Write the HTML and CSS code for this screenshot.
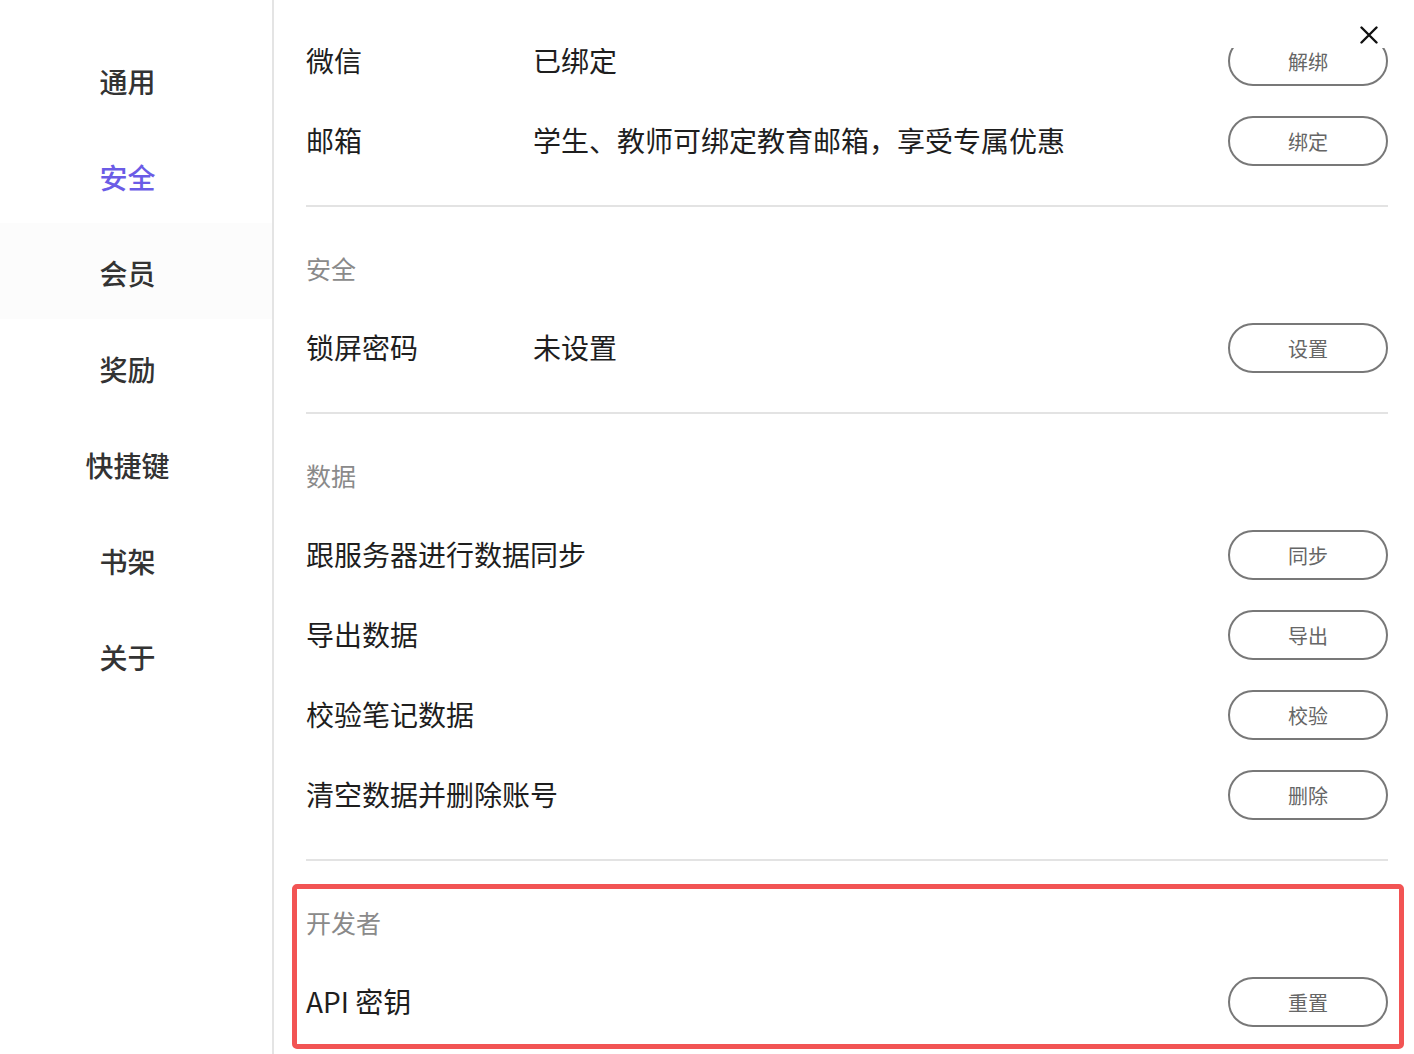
FILE: index.html
```html
<!DOCTYPE html>
<html lang="zh-CN">
<head>
<meta charset="utf-8">
<title>设置</title>
<link rel="stylesheet" href="styles.css">
</head>
<body>
<div class="app">
  <nav class="sidebar">
    <div class="nav-item">通用</div>
    <div class="nav-item active">安全</div>
    <div class="nav-item hover">会员</div>
    <div class="nav-item">奖励</div>
    <div class="nav-item">快捷键</div>
    <div class="nav-item">书架</div>
    <div class="nav-item">关于</div>
  </nav>
  <main class="pane">
    <header class="pane-head">
      <button class="close" aria-label="关闭">
        <svg width="18" height="18" viewBox="0 0 18 18"><path d="M1.5 1.5 L16.5 16.5 M16.5 1.5 L1.5 16.5" stroke="#111" stroke-width="2.4" stroke-linecap="round" fill="none"/></svg>
      </button>
    </header>
    <div class="scroll">
      <div class="content">
        <section class="section">
          <div class="row">
            <span class="label">微信</span>
            <span class="value">已绑定</span>
            <button class="btn">解绑</button>
          </div>
          <div class="row">
            <span class="label">邮箱</span>
            <span class="value">学生、教师可绑定教育邮箱，享受专属优惠</span>
            <button class="btn">绑定</button>
          </div>
        </section>
        <section class="section">
          <div class="sec-title">安全</div>
          <div class="row">
            <span class="label">锁屏密码</span>
            <span class="value">未设置</span>
            <button class="btn">设置</button>
          </div>
        </section>
        <section class="section">
          <div class="sec-title">数据</div>
          <div class="row">
            <span class="label wide">跟服务器进行数据同步</span>
            <button class="btn">同步</button>
          </div>
          <div class="row">
            <span class="label wide">导出数据</span>
            <button class="btn">导出</button>
          </div>
          <div class="row">
            <span class="label wide">校验笔记数据</span>
            <button class="btn">校验</button>
          </div>
          <div class="row">
            <span class="label wide">清空数据并删除账号</span>
            <button class="btn">删除</button>
          </div>
        </section>
        <section class="section last">
          <div class="sec-title">开发者</div>
          <div class="row">
            <span class="label wide">API 密钥</span>
            <button class="btn">重置</button>
          </div>
        </section>
      </div>
    </div>
  </main>
  <div class="highlight"></div>
</div>
</body>
</html>
```

FILE: styles.css
```css
* { box-sizing: border-box; }
html, body {
  margin: 0;
  padding: 0;
  background: #fff;
  height: 100%;
  overflow: hidden;
}
body {
  font-family: "Noto Sans CJK SC", "Noto Sans", "Liberation Sans", sans-serif;
  color: #222;
}
.app {
  position: relative;
  display: flex;
  width: 1414px;
  height: 1054px;
}
.sidebar {
  width: 274px;
  flex: none;
  border-right: 2px solid #e4e4e4;
  padding-top: 31px;
  display: flex;
  flex-direction: column;
}
.nav-item {
  height: 96px;
  display: flex;
  align-items: center;
  justify-content: center;
  padding-top: 4px;
  font-size: 28px;
  font-weight: 500;
  color: #333;
  margin-right: 17px;
}
.nav-item.active { color: #6b5ce6; }
.nav-item.hover { background: #fcfcfc; margin-right: 0; padding-right: 17px; }
.pane {
  flex: 1;
  display: flex;
  flex-direction: column;
  min-width: 0;
}
.pane-head {
  height: 48px;
  flex: none;
  display: flex;
  justify-content: flex-end;
  align-items: flex-start;
  padding: 26px 36px 0 0;
}
.close {
  border: 0;
  background: none;
  padding: 0;
  width: 18px;
  height: 18px;
  display: block;
  cursor: pointer;
}
.close svg { display: block; }
.scroll {
  flex: 1;
  overflow: hidden;
  padding: 0 26px 0 32px;
}
.content {
  margin-top: -27px;
}
.section {
  padding-bottom: 24px;
  border-bottom: 2px solid #e3e3e3;
  margin-bottom: 24px;
}
.section.last { border-bottom: 0; }
.sec-title {
  height: 77px;
  display: flex;
  align-items: center;
  padding-bottom: 4px;
  font-size: 25px;
  color: #8a8a8a;
}
.row {
  height: 80px;
  display: flex;
  align-items: center;
  font-size: 28px;
  color: #1e1e1e;
}
.label { width: 229px; flex: none; white-space: nowrap; padding-bottom: 3px; }
.label.wide { width: auto; flex: 1; }
.value { flex: 1; white-space: nowrap; padding-bottom: 3px; margin-left: -2px; }
.btn {
  width: 160px;
  height: 50px;
  flex: none;
  margin-left: auto;
  border: 2px solid #787878;
  border-radius: 25px;
  background: #fff;
  font-family: inherit;
  font-size: 20px;
  color: #666;
  padding: 0;
  display: flex;
  align-items: center;
  justify-content: center;
}
.highlight {
  position: absolute;
  left: 292px;
  top: 884px;
  width: 1112px;
  height: 165px;
  border: 5px solid #f25454;
  border-radius: 5px;
  pointer-events: none;
}
```
